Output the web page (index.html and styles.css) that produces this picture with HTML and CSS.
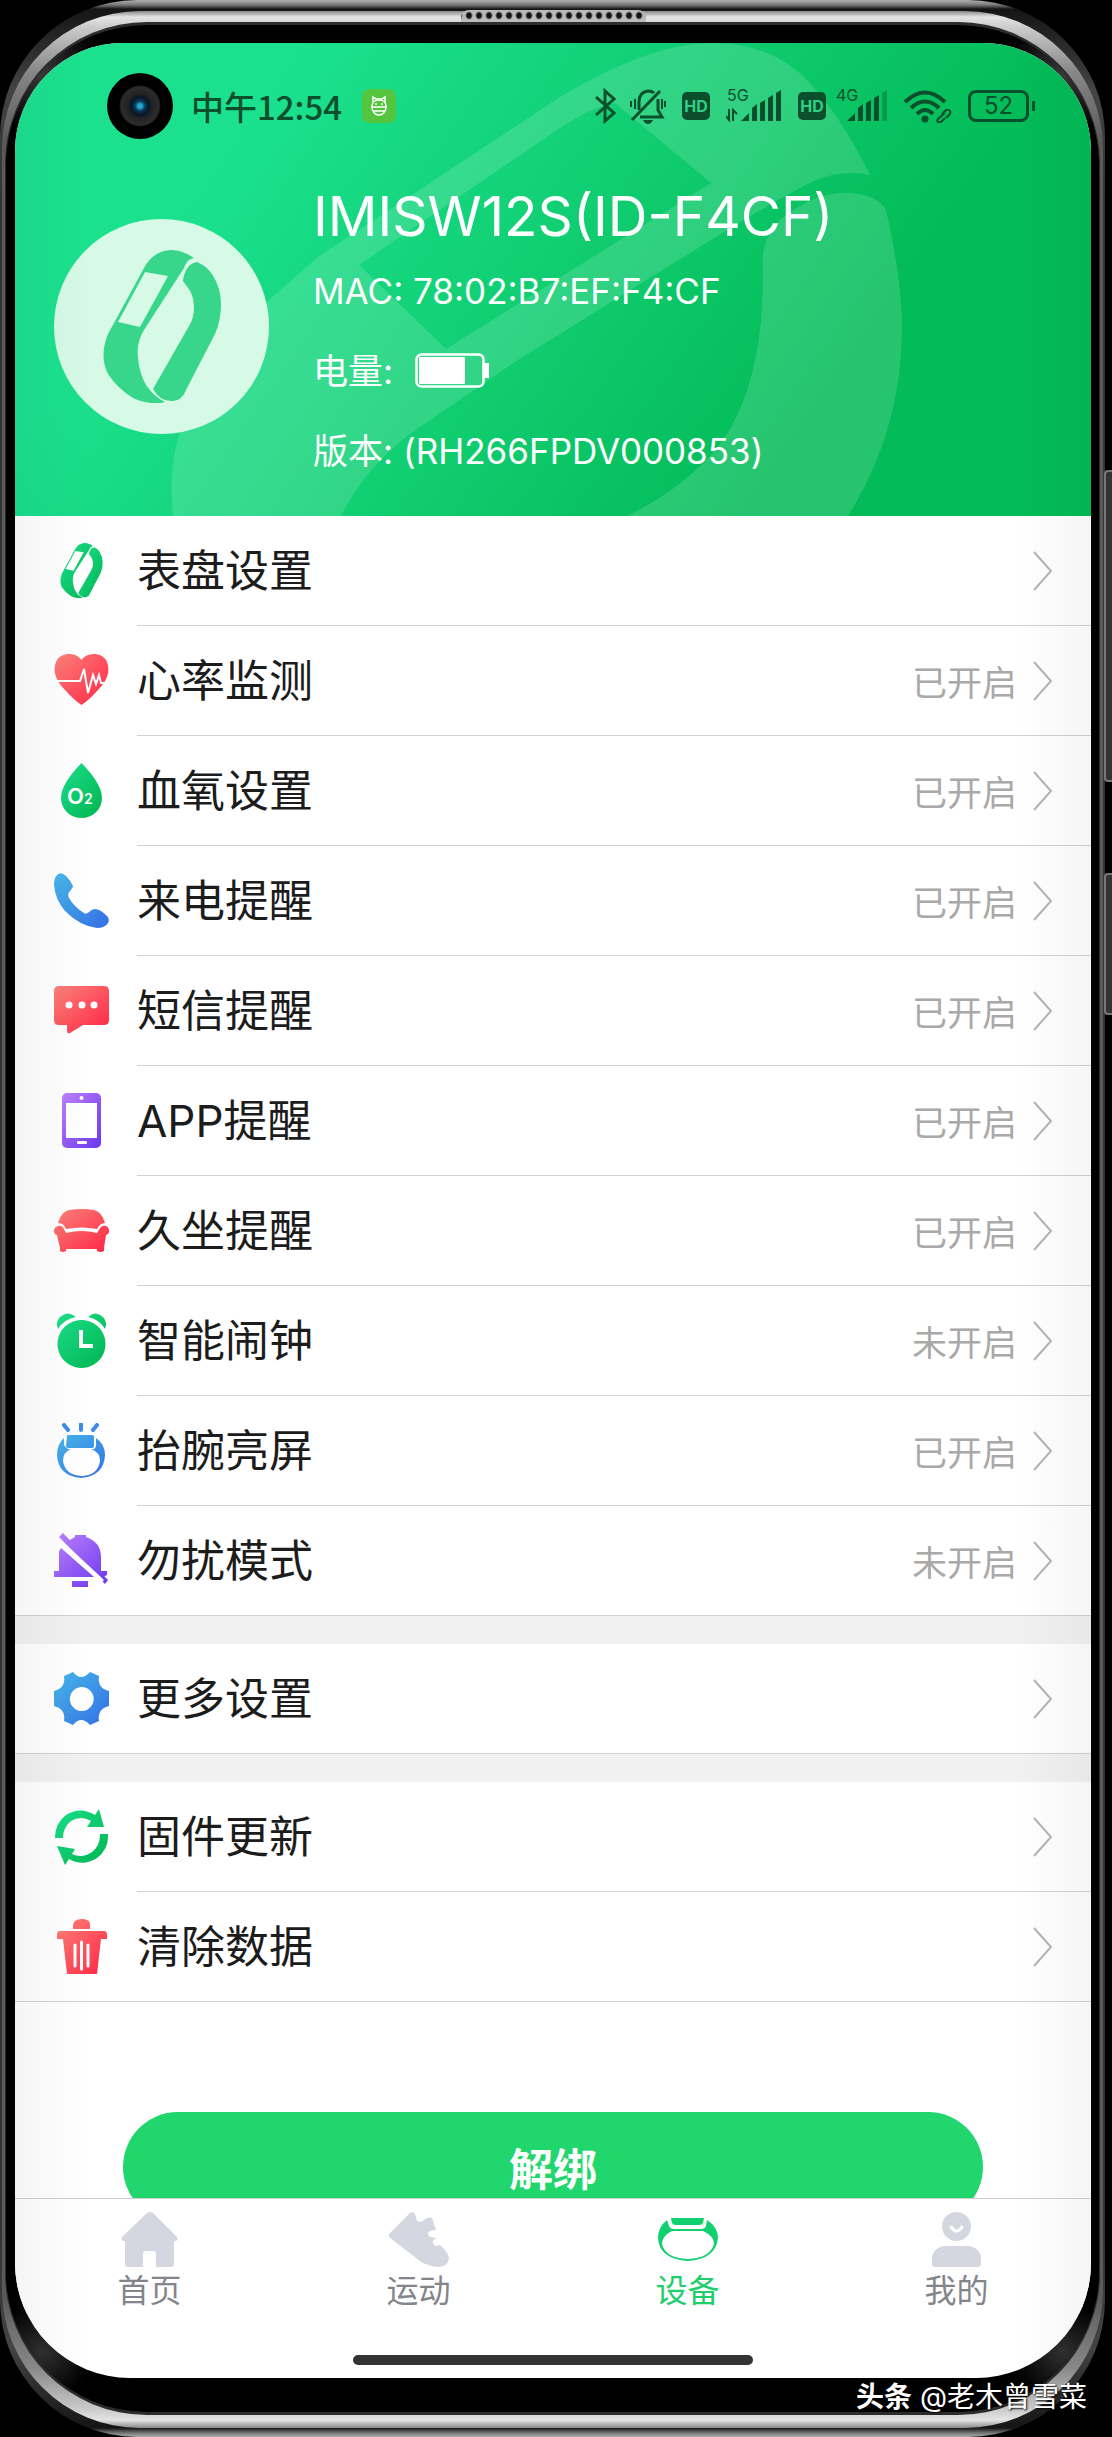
FILE: index.html
```html
<!DOCTYPE html>
<html lang="zh-CN">

<head>
    <meta charset="UTF-8">
    <meta name="viewport" content="width=device-width, initial-scale=1.0">
    <title>设备</title>
    <link rel="stylesheet" href="styles.css">
</head>

<body>
    <!-- Gradientes e símbolos compartilhados -->
    <svg class="defs" width="0" height="0" aria-hidden="true">
        <defs>
            <linearGradient id="green" x1="0" y1="0" x2="1" y2="1">
                <stop offset="0" stop-color="#1be08c" />
                <stop offset="1" stop-color="#01b450" />
            </linearGradient>
            <linearGradient id="red" x1="0" y1="0" x2="1" y2="1">
                <stop offset="0" stop-color="#fd837a" />
                <stop offset="1" stop-color="#fe2545" />
            </linearGradient>
            <linearGradient id="blue" x1="0" y1="0" x2="1" y2="1">
                <stop offset="0" stop-color="#47b8ea" />
                <stop offset="1" stop-color="#346fe4" />
            </linearGradient>
            <linearGradient id="purple" x1="0" y1="0" x2="1" y2="1">
                <stop offset="0" stop-color="#bd83fb" />
                <stop offset="1" stop-color="#6a35f0" />
            </linearGradient>
        </defs>
        <symbol id="band" viewBox="48 30 118 153">
            <path fill-rule="evenodd" d="M116 30C125 30 133 34 139 38C133 39 131 43 129 48L89 110C83 120 82 130 83 138C85 160 94 174 110 182Q104 184 96 183Q86 182 78 178Q62 168 53 154C46 140 48 126 53 114L89 48Q98 31 116 30ZM90 52L63 102L85 107L113 56Z" />
            <path d="M142 42Q150 45 157 54Q166 68 166 84Q166 100 160 114L132 168Q127 181 118 181Q105 182 98 169L134 106Q139 98 139 88C139 74 134 69 128 61C129 51 134 43 142 42Z" />
        </symbol>
        <symbol id="chevron" viewBox="0 0 20 40">
            <path d="M1 1L18 20L1 39" fill="none" stroke="#b4b4b4" stroke-width="2" />
        </symbol>
    </svg>

    <div class="phone">
        <i class="speaker"></i>
        <i class="key power"></i>
        <i class="key volume"></i>
        <div class="rim">
            <div class="bezel">
                <div class="screen">
                    <header class="header">
                        <svg class="header-art" viewBox="15 43 1076 473" preserveAspectRatio="none" aria-hidden="true">
                            <path fill-rule="evenodd" d="M560 97Q650 43 713 43Q766 43 802 75Q838 110 870 175Q835 168 802 187Q780 198 727 230L518 360L411 433Q365 468 341 516L173 516Q168 470 179 435Q195 370 269 300L318 257ZM359 265L446 349L711 183L615 103Q590 108 560 128Z" />
                            <path d="M763 270Q760 240 780 220Q815 191 850 193Q878 195 886 210Q902 280 902 327Q902 430 848 516L627 516Q670 495 698 468Q764 410 763 270Z" />
                        </svg>

                        <div class="status">
                            <span class="camera"></span>
                            <time class="clock">中午12:54</time>
                            <svg class="app-badge" width="34" height="34" viewBox="0 0 34 34">
                                <rect width="34" height="34" rx="7" fill="#54c53e" />
                                <g fill="none" stroke="#fff" stroke-width="1.500">
                                    <path d="M11 13V8l3 2h6l3-2v5" />
                                    <path d="M10 18a7 8 0 0 0 14 0c0-6-3-7-7-7s-7 1-7 7zM9 18h16M11 22h12" />
                                </g>
                                <circle cx="14" cy="15" r="1" fill="#fff" />
                                <circle cx="20" cy="15" r="1" fill="#fff" />
                            </svg>

                            <div class="status-right">
                                <svg width="22" height="36" viewBox="0 0 22 36">
                                    <path d="M2 9L20 25L11 33V3L20 11L2 27" fill="none" stroke="#0c4f2c" stroke-width="3" />
                                </svg>
                                <svg class="gap-l" width="36" height="36" viewBox="0 0 36 36">
                                    <g fill="none" stroke="#0c4f2c" stroke-width="3">
                                        <path d="M2 32L30 3" />
                                        <path d="M9 22V14Q9 4 18 3Q22 3 24 5M28 11V22L32 29H10" />
                                        <path d="M5 11V21M1 13V19M32 11V21M35 13V19" stroke-width="2" />
                                    </g>
                                    <path d="M13 32h10q-2 4-5 4t-5-4z" fill="#0c4f2c" />
                                </svg>
                                <span class="hd">HD</span>
                                <span class="cell">
                                    <span class="net">5G</span>
                                    <svg width="56" height="32" viewBox="0 0 56 32" fill="#0c4f2c">
                                        <path d="M3 19V30L0 26M7 31V20L11 24" fill="none" stroke="#0c4f2c" stroke-width="2" />
                                        <path d="M15 31l8-8v8zM26 18l5-4v17h-5zM34 13l5-3v21h-5zM42 8l5-3v26h-5zM50 3l5-3v31h-5z" />
                                    </svg>
                                </span>
                                <span class="hd">HD</span>
                                <span class="cell second">
                                    <span class="net">4G</span>
                                    <svg width="53" height="32" viewBox="0 0 53 32" fill="#0c4f2c">
                                        <path d="M12 31l8-8v8zM23 18l5-4v17h-5zM31 13l5-3v21h-5zM39 8l5-3v26h-5z" />
                                        <path d="M47 3l5-3v31h-5z" opacity=".35" />
                                    </svg>
                                </span>
                                <svg class="gap-m" width="48" height="34" viewBox="0 0 48 34">
                                    <g fill="none" stroke="#0c4f2c">
                                        <path d="M1 13Q21-6 41 13M7 19Q21 6 35 19M13 25Q21 17 29 25" stroke-width="4" />
                                        <path d="M38 25l4-4q3-1 4 1t-1 4l-3 3M41 24l-6 5q-3 3-1 4t4-1l3-3" stroke-width="2" />
                                    </g>
                                    <circle cx="21" cy="30" r="3.500" fill="#0c4f2c" />
                                </svg>
                                <span class="battery">52</span>
                            </div>
                        </div>

                        <div class="device">
                            <div class="avatar">
                                <svg width="118" height="153" fill="#38d68b"><use href="#band" /></svg>
                            </div>
                            <div class="info">
                                <h1>IMISW12S(ID-F4CF)</h1>
                                <p>MAC: 78:02:B7:EF:F4:CF</p>
                                <p class="power-line">电量:
                                    <svg width="74" height="36" viewBox="0 0 74 36">
                                        <rect x="1.500" y="1.500" width="67" height="32" rx="5" fill="none" stroke="#fff" stroke-width="2.500" />
                                        <rect x="4" y="4" width="46" height="27" rx="1" fill="#fff" />
                                        <rect x="69" y="10" width="5" height="15" fill="#fff" />
                                    </svg>
                                </p>
                                <p>版本: (RH266FPDV000853)</p>
                            </div>
                        </div>
                    </header>

                    <main class="content">
                        <ul class="group">
                            <li><a class="row" href="#">
                                <svg class="icon" viewBox="0 0 56 56" fill="url(#green)"><use href="#band" x="6" y="0" width="43" height="55" /></svg>
                                <span class="cell-body"><span class="label">表盘设置</span><svg class="chevron"><use href="#chevron" /></svg></span>
                            </a></li>
                            <li><a class="row" href="#">
                                <svg class="icon" viewBox="0 0 56 56">
                                    <path d="M27.500 7C22-1 8-1 3 7C-3 18 3 29 12 38Q20 47 27.500 52Q35 47 43 38C52 29 58 18 52 7C47-1 33-1 27.500 7Z" fill="url(#red)" />
                                    <path d="M2 28H26L30 16L34 40L39 22L42 31L45 22L47 30H54" fill="none" stroke="#fff" stroke-width="2" />
                                </svg>
                                <span class="cell-body"><span class="label">心率监测</span><span class="state">已开启</span><svg class="chevron"><use href="#chevron" /></svg></span>
                            </a></li>
                            <li><a class="row" href="#">
                                <svg class="icon" viewBox="0 0 56 56">
                                    <path d="M27.500 0Q48 21 48 35A20.500 20 0 0 1 7 35Q7 21 27.500 0Z" fill="url(#green)" />
                                    <text class="o2" x="13" y="41">O<tspan class="o2-sub">2</tspan></text>
                                </svg>
                                <span class="cell-body"><span class="label">血氧设置</span><span class="state">已开启</span><svg class="chevron"><use href="#chevron" /></svg></span>
                            </a></li>
                            <li><a class="row" href="#">
                                <svg class="icon" viewBox="0 0 56 56" fill="url(#blue)">
                                    <path d="M3 2Q7-2 12 3Q17 8 19 13Q19 15 16 18Q13 21 15 25Q20 34 30 40Q32 42 35 39Q38 36 41 36Q46 36 53 43Q56 46 54 50Q51 55 43 55Q26 53 11 38Q1 26 0 12Q0 5 3 2Z" />
                                </svg>
                                <span class="cell-body"><span class="label">来电提醒</span><span class="state">已开启</span><svg class="chevron"><use href="#chevron" /></svg></span>
                            </a></li>
                            <li><a class="row" href="#">
                                <svg class="icon" viewBox="0 0 56 56">
                                    <path d="M5 3H50Q55 3 55 8V37Q55 42 50 42H29L16 50Q13 51 13 48V42H5Q0 42 0 37V8Q0 3 5 3Z" fill="url(#red)" />
                                    <g fill="#fff"><circle cx="15" cy="22" r="3.500" /><circle cx="28" cy="22" r="3.500" /><circle cx="40" cy="22" r="3.500" /></g>
                                </svg>
                                <span class="cell-body"><span class="label">短信提醒</span><span class="state">已开启</span><svg class="chevron"><use href="#chevron" /></svg></span>
                            </a></li>
                            <li><a class="row" href="#">
                                <svg class="icon" viewBox="0 0 56 56">
                                    <rect x="8" width="39" height="55" rx="5" fill="url(#purple)" />
                                    <g fill="#fff"><rect x="12" y="10" width="31" height="35" /><circle cx="27.500" cy="5" r="2" /><rect x="23" y="48" width="10" height="3" rx="1" /></g>
                                </svg>
                                <span class="cell-body"><span class="label">APP提醒</span><span class="state">已开启</span><svg class="chevron"><use href="#chevron" /></svg></span>
                            </a></li>
                            <li><a class="row" href="#">
                                <svg class="icon" viewBox="0 0 56 56" fill="url(#red)">
                                    <path d="M4 20Q7 9 15 7Q28 5 40 7Q48 9 51 20Q46 20 43 26Q28 23 12 26Q10 20 4 20ZM0 28Q0 24 4 23Q8 22 10 26L12 30Q28 26 43 30L46 25Q48 22 52 23Q55 24 55 28Q55 31 52 32L50 45V48Q47 50 43 48V46H12V48Q9 50 6 48V45L3 32Q0 31 0 28Z" />
                                </svg>
                                <span class="cell-body"><span class="label">久坐提醒</span><span class="state">已开启</span><svg class="chevron"><use href="#chevron" /></svg></span>
                            </a></li>
                            <li><a class="row" href="#">
                                <svg class="icon" viewBox="0 0 56 56">
                                    <path d="M4 16Q1 9 6 4Q14-3 22 4Q10 6 4 16ZM51 16Q54 9 49 4Q41-3 34 4Q45 6 51 16ZM28 7A24 24 0 1 1 27 7Z" fill="url(#green)" />
                                    <path d="M27 17V33H39" fill="none" stroke="#fff" stroke-width="4" />
                                </svg>
                                <span class="cell-body"><span class="label">智能闹钟</span><span class="state">未开启</span><svg class="chevron"><use href="#chevron" /></svg></span>
                            </a></li>
                            <li><a class="row" href="#">
                                <svg class="icon" viewBox="0 0 56 56">
                                    <path d="M10 2L14 7M27 1V7M43 2L39 7" stroke="#3c8be6" stroke-width="4" stroke-linecap="round" />
                                    <path fill-rule="evenodd" fill="url(#blue)" d="M13 13Q13 12 14 12H38Q40 12 40 14V23Q40 25 38 25H14Q12 25 12 23ZM10 15V22Q13 27 17 26Q9 29 9 38Q11 52 28 53Q44 52 46 38Q46 29 37 26Q42 27 42 22V15Q51 21 51 32Q50 53 27 55Q4 53 3 32Q3 21 10 15Z" />
                                </svg>
                                <span class="cell-body"><span class="label">抬腕亮屏</span><span class="state">已开启</span><svg class="chevron"><use href="#chevron" /></svg></span>
                            </a></li>
                            <li><a class="row" href="#">
                                <svg class="icon" viewBox="0 0 56 56">
                                    <path fill="url(#purple)" d="M21 2H32V4Q47 9 47 24V38H53V42L49 44L12 11Q16 6 21 4ZM5 21Q5 17 7 15L40 44H0V38H5ZM18 48H34V54H18ZM9 0L54 47L51 51L5 4Z" />
                                    <path d="M6 8L49 48" stroke="#fff" stroke-width="3" />
                                </svg>
                                <span class="cell-body"><span class="label">勿扰模式</span><span class="state">未开启</span><svg class="chevron"><use href="#chevron" /></svg></span>
                            </a></li>
                        </ul>

                        <ul class="group">
                            <li><a class="row" href="#">
                                <svg class="icon" viewBox="0 0 56 56">
                                    <path fill-rule="evenodd" fill="url(#blue)" d="M10 5L19 1Q27 11 36 1L45 5Q43 17 55 20V35Q43 38 45 50L36 54Q27 44 19 54L10 50Q12 38 0 35V20Q12 17 10 5ZM27.500 16A12 12 0 1 0 28 16Z" />
                                </svg>
                                <span class="cell-body"><span class="label">更多设置</span><svg class="chevron"><use href="#chevron" /></svg></span>
                            </a></li>
                        </ul>

                        <ul class="group">
                            <li><a class="row" href="#">
                                <svg class="icon" viewBox="0 0 56 56" fill="url(#green)">
                                    <path d="M1 29Q1 14 12 6Q26-3 41 6L45 0L50 18L33 18L37 12Q27 6 17 12Q9 18 9 29ZM54 25Q55 40 43 49Q29 58 15 50L11 56L3 37L21 40L18 45Q28 50 38 43Q46 37 46 25Z" />
                                </svg>
                                <span class="cell-body"><span class="label">固件更新</span><svg class="chevron"><use href="#chevron" /></svg></span>
                            </a></li>
                            <li><a class="row" href="#">
                                <svg class="icon" viewBox="0 0 56 56">
                                    <path fill="url(#red)" d="M19 10V7Q19 0 28 0T36 7V10ZM6 12H50Q53 12 53 16V20H47L43 55H13L9 20H3V16Q3 12 6 12Z" />
                                    <path d="M21 26V47M27.500 23V50M34 26V47" stroke="#fff" stroke-width="3" stroke-linecap="round" />
                                </svg>
                                <span class="cell-body"><span class="label">清除数据</span><svg class="chevron"><use href="#chevron" /></svg></span>
                            </a></li>
                        </ul>

                        <div class="action">
                            <button class="unbind" type="button">解绑</button>
                        </div>
                    </main>

                    <nav class="tabs">
                        <a class="tab" href="#">
                            <svg viewBox="0 0 60 56" fill="#d4d7df"><path d="M27 1Q30-1 33 1L57 25Q59 29 54 29V52Q54 55 51 55H36V42Q36 39 33 39H26Q23 39 23 42V55H8Q5 55 5 52V29Q0 29 2 25Z" /></svg>
                            首页
                        </a>
                        <a class="tab" href="#">
                            <svg viewBox="0 0 60 56" fill="#d4d7df"><path d="M21 1Q24-1 26 2L28 9Q32 11 35 8T43 6L47 18Q39 18 39 22T49 26Q43 27 44 31T51 33Q60 41 60 47Q58 55 49 55Q36 54 27 46L0 25Q-1 23 1 21Z" /></svg>
                            运动
                        </a>
                        <a class="tab active" href="#">
                            <svg viewBox="0 0 60 56" fill="#10d06f"><path fill-rule="evenodd" d="M13 6H46L45 11Q44 13 41 13H18Q15 13 14 11ZM9 8L11 14Q12 17 16 17H43Q47 17 48 14L49 8Q60 15 60 26Q58 47 30 49Q1 47 0 26Q0 15 9 8ZM14 19Q4 24 4 32Q7 46 30 47Q52 46 56 32Q56 24 45 19Z" /></svg>
                            设备
                        </a>
                        <a class="tab" href="#">
                            <svg viewBox="0 0 60 56" fill="#d4d7df"><circle cx="29.500" cy="14.500" r="14.500" /><path d="M17 34H42Q54 36 54 48V52Q54 55 51 55H8Q5 55 5 52V48Q5 36 17 34Z" /><path d="M24 15Q30 23 35 15" fill="none" stroke="#fff" stroke-width="3" stroke-linecap="round" /></svg>
                            我的
                        </a>
                    </nav>
                    <div class="home-bar"></div>
                </div>
            </div>
        </div>
        <p class="credit"><b>头条</b> @老木曾雪菜</p>
    </div>
</body>

</html>
```

FILE: styles.css
```css
* {
    box-sizing: border-box;
}

body {
    margin: 0;
    background-color: #000;
    font-family: Inter, "Noto Sans CJK SC", sans-serif;
    color: #1c1c1c;
}

h1,
p,
ul {
    margin: 0;
    padding: 0;
}

ul {
    list-style: none;
}

a {
    color: inherit;
    text-decoration: none;
}

svg {
    display: block;
    flex-shrink: 0;
}

.defs {
    position: absolute;
}

/* Moldura do telefone */
.phone {
    position: relative;
    display: flex;
    height: 100vh;
    margin-right: 7px;
    padding: 11px 2px 9px;
    border-radius: 137px;
    background: linear-gradient(#b0b0b0, #777 5px, #151515 9px, #444 90px, #333 200px, #333 calc(100% - 200px), #444 calc(100% - 90px), #151515 calc(100% - 9px), #777 calc(100% - 4px), #aaa);
}

.rim {
    display: flex;
    flex: 1;
    min-width: 0;
    padding: 11px 3px 13px;
    border-radius: 138px;
    background: linear-gradient(#888, #e4e4e4 6px, #ccc 16px, #888 60px, #5a5a5a 130px, #5a5a5a calc(100% - 130px), #888 calc(100% - 60px), #ccc calc(100% - 18px), #e4e4e4 calc(100% - 8px), #888);
}

.bezel {
    display: flex;
    flex: 1;
    min-width: 0;
    padding: 18px 8px 34px 9px;
    border: 3px solid #2c2c2c;
    border-width: 3px 1px;
    border-radius: 142px;
    background:
        radial-gradient(circle at 36px 50px, #383838, transparent 60px),
        radial-gradient(circle at calc(100% - 36px) 50px, #383838, transparent 60px),
        radial-gradient(circle at 36px calc(100% - 60px), #303030, transparent 50px),
        radial-gradient(circle at calc(100% - 36px) calc(100% - 60px), #303030, transparent 50px),
        #000;
}

.speaker {
    position: absolute;
    top: 10px;
    left: 461px;
    width: 185px;
    height: 12px;
    border-radius: 8px 8px 0 0;
    background: radial-gradient(ellipse at center, #111 2px, #bbb 4px) 3px 0 / 10px 11px;
}

.key {
    position: absolute;
    right: -7px;
    width: 8px;
    border: 2px solid #777;
    border-right: 0;
    border-radius: 4px 0 0 4px;
    background-color: #333;
}

.power {
    top: 470px;
    height: 312px;
}

.volume {
    top: 873px;
    height: 142px;
}

.screen {
    position: relative;
    display: flex;
    flex: 1;
    flex-direction: column;
    min-width: 0;
    overflow: hidden;
    border-radius: 108px 108px 115px 115px;
    background-color: #fff;
}

/* Sombra suave nas bordas curvas da tela */
.screen::after {
    content: "";
    position: absolute;
    inset: 0;
    pointer-events: none;
    background: linear-gradient(90deg, rgba(0, 0, 0, 0.04), transparent 75px, transparent calc(100% - 75px), rgba(0, 0, 0, 0.04));
}

/* Cabeçalho */
.header {
    position: relative;
    padding-bottom: 25px;
    background: linear-gradient(125deg, #1be18f 20%, #10cd70 50%, #03bb58 75%);
    color: #fff;
}

.header-art {
    position: absolute;
    inset: 0;
    width: 100%;
    height: 100%;
    fill: rgba(255, 255, 255, 0.14);
}

.status {
    position: relative;
    display: flex;
    align-items: center;
    height: 126px;
    padding: 0 55px 0 92px;
    color: #0c4f2c;
}

.camera {
    width: 66px;
    height: 66px;
    border-radius: 50%;
    background: radial-gradient(circle, #27a5d8 2px, #0c3856 5px, #071626 9px, #222 12px, #2d2d2d 19px, #000 21px);
}

.clock {
    margin-left: 18px;
    font-family: "Noto Sans CJK SC", sans-serif;
    font-size: 33px;
    font-weight: 500;
    line-height: 40px;
}

.app-badge {
    margin-left: 20px;
}

.status-right {
    display: flex;
    align-items: center;
    margin-left: auto;
}

.gap-l {
    margin-left: 14px;
}

.gap-m {
    margin-left: 16px;
}

.hd {
    width: 28px;
    margin-left: 16px;
    border-radius: 5px;
    background-color: #0c4f2c;
    color: #2fd084;
    font-size: 16px;
    font-weight: 700;
    line-height: 28px;
    text-align: center;
}

.cell {
    position: relative;
    margin-left: 16px;
}

.cell.second {
    margin-left: 9px;
}

.net {
    position: absolute;
    top: -3px;
    left: 1px;
    font-size: 16px;
    line-height: 16px;
}

.battery {
    position: relative;
    width: 61px;
    margin: 0 7px 0 16px;
    border: 3px solid #0c4f2c;
    border-radius: 8px;
    font-size: 24px;
    line-height: 26px;
    text-align: center;
}

.battery::after {
    content: "";
    position: absolute;
    top: 8px;
    right: -9px;
    width: 3px;
    height: 10px;
    background-color: #0c4f2c;
}

.device {
    position: relative;
    display: flex;
    gap: 44px;
    padding: 12px 39px 0;
}

.avatar {
    display: flex;
    align-items: center;
    justify-content: center;
    flex-shrink: 0;
    width: 215px;
    height: 215px;
    margin-top: 38px;
    border-radius: 50%;
    background-color: #d6fae6;
}

.info {
    font-size: 35px;
    line-height: 80px;
    white-space: nowrap;
}

.info h1 {
    font-size: 55px;
    font-weight: 400;
    line-height: 70px;
}

.power-line {
    display: flex;
    align-items: center;
    gap: 22px;
}

/* Lista de opções */
.content {
    flex: 1;
    min-height: 0;
    overflow: hidden auto;
    scrollbar-width: none;
}

.group {
    border-bottom: 1px solid #d2d2d2;
}

.group + .group {
    border-top: 28px solid #f1f1f1;
}

.row {
    display: flex;
    align-items: center;
    gap: 27px;
    height: 110px;
    padding-left: 39px;
}

li:last-child .row {
    height: 109px;
}

.icon {
    width: 56px;
    height: 56px;
}

.cell-body {
    display: flex;
    align-items: center;
    flex: 1;
    height: 100%;
    padding-right: 38px;
    border-bottom: 1px solid #d2d2d2;
}

li:last-child .cell-body {
    border-bottom: 0;
}

.label {
    flex: 1;
    font-size: 44px;
    line-height: 64px;
}

.state {
    margin-right: 16px;
    color: #a9a9a9;
    font-size: 35px;
}

.chevron {
    width: 20px;
    height: 40px;
}

.o2 {
    fill: #fff;
    font-family: Inter, sans-serif;
    font-size: 22px;
    font-weight: 600;
}

.o2-sub {
    font-size: 14px;
}

.action {
    padding: 110px 108px 60px;
}

.unbind {
    display: block;
    width: 100%;
    height: 110px;
    border: 0;
    border-radius: 55px;
    background-color: #20d66d;
    color: #fff;
    font: inherit;
    font-size: 44px;
    font-weight: 700;
}

/* Navegação inferior */
.tabs {
    display: grid;
    grid-template-columns: repeat(4, 1fr);
    border-top: 1px solid #cfcfcf;
    background-color: #fff;
}

.tab {
    display: flex;
    flex-direction: column;
    align-items: center;
    padding-top: 13px;
    color: #83858b;
    font-size: 32px;
    line-height: 46px;
}

.tab svg {
    width: 60px;
    height: 56px;
}

.tab.active {
    color: #20cf6c;
}

.home-bar {
    width: 400px;
    max-width: 60%;
    height: 10px;
    margin: 41px auto 13px;
    border-radius: 5px;
    background-color: #333;
}

.credit {
    position: absolute;
    right: 18px;
    bottom: 20px;
    color: #fff;
    font-size: 28px;
    line-height: 40px;
    text-shadow: 1px 1px 2px #000;
}
```
